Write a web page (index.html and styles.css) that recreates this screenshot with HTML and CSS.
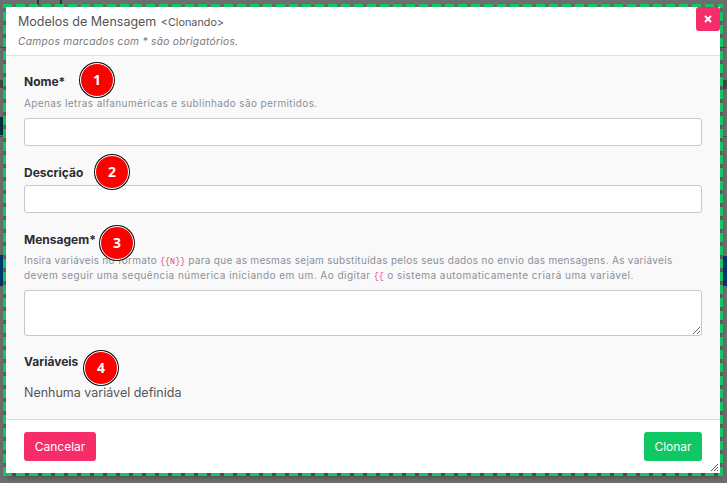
FILE: index.html
```html
<!DOCTYPE html>
<html lang="pt-BR">
<head>
<meta charset="utf-8">
<title>Modelos de Mensagem</title>
<link rel="stylesheet" href="styles.css">
</head>
<body>
<div class="modal">
  <header class="modal-header">
    <h1 class="modal-title">Modelos de Mensagem <small>&lt;Clonando&gt;</small></h1>
    <p class="modal-sub">Campos marcados com * são obrigatórios.</p>
    <button class="close" type="button" aria-label="Fechar">
      <svg width="8" height="8" viewBox="0 0 8 8"><path d="M1 1l6 6M7 1L1 7" stroke="#fff" stroke-width="2"/></svg>
    </button>
  </header>
  <main class="modal-body">
    <section class="field field-nome">
      <label class="label">Nome*<span class="pin pin-1">1</span></label>
      <p class="hint">Apenas letras alfanuméricas e sublinhado são permitidos.</p>
      <input class="control" type="text">
    </section>
    <section class="field field-desc">
      <label class="label">Descrição<span class="pin pin-2">2</span></label>
      <input class="control" type="text">
    </section>
    <section class="field field-msg">
      <label class="label">Mensagem*<span class="pin pin-3">3</span></label>
      <p class="hint hint-long">Insira variáveis no formato <code>{{N}}</code> para que as mesmas sejam substituídas pelos seus dados no envio das mensagens. As variáveis <span class="hint-wide">devem seguir uma sequência númerica iniciando em um. Ao digitar <code>{{</code> o sistema automaticamente criará uma variável.</span></p>
      <textarea class="control area"></textarea>
    </section>
    <section class="field field-vars">
      <label class="label">Variáveis<span class="pin pin-4">4</span></label>
      <p class="none">Nenhuma variável definida</p>
    </section>
  </main>
  <footer class="modal-footer">
    <button class="btn btn-cancel" type="button">Cancelar</button>
    <button class="btn btn-ok" type="button">Clonar</button>
    <svg class="grip" width="9" height="9" viewBox="0 0 9 9"><path d="M1 8l7-7M4 8l4-4M7 8l1-1" stroke="#555" stroke-width="1"/></svg>
  </footer>
</div>
</body>
</html>
```
FILE: styles.css
```css
* { box-sizing: border-box; }
html, body { height: 100%; }
body {
  margin: 0;
  padding: 7px 7px 10px 6px;
  font-family: "Inter", "Liberation Sans", sans-serif;
  color: #3f3f46;
  background-color: #6e6e6e;
  background-repeat: no-repeat;
  background-image:
    linear-gradient(#07303a, #07303a),
    linear-gradient(#00396b, #00396b),
    linear-gradient(#454545, #454545),
    linear-gradient(#00396b, #00396b),
    linear-gradient(#454545, #454545),
    linear-gradient(#4d4d4d, #4d4d4d),
    linear-gradient(#4d4d4d, #4d4d4d),
    linear-gradient(#333, #333),
    linear-gradient(#333, #333);
  background-size:
    3px 18px, 3px 31px, 3px 8px, 4px 30px, 4px 9px,
    727px 1px, 727px 1px, 2px 5px, 2px 5px;
  background-position:
    0 117px, 0 255px, 0 80px, 723px 256px, 723px 80px,
    0 47px, 0 136px, 37px 0, 60px 0;
}
.modal {
  position: relative;
  height: 466px;
  width: 714px;
  background: #fff;
  box-shadow: 0 3px 6px rgba(0,0,0,.45);
  display: flex;
  flex-direction: column;
}
.modal::after {
  content: "";
  position: absolute;
  inset: -3px;
  pointer-events: none;
  background-repeat: no-repeat;
  background-image:
    repeating-linear-gradient(90deg, #0fc763 0 9px, transparent 9px 13px),
    repeating-linear-gradient(90deg, #0fc763 0 9px, transparent 9px 13px),
    repeating-linear-gradient(0deg, #0fc763 0 9px, transparent 9px 13px),
    repeating-linear-gradient(0deg, #0fc763 0 9px, transparent 9px 13px);
  background-size: 100% 3px, 100% 3px, 3px 100%, 3px 100%;
  background-position: 0 0, 0 100%, 0 0, 100% 0;
}
.modal-header {
  position: relative;
  height: 49px;
  padding: 7px 12px 0;
  border-bottom: 1px solid #dedede;
  flex: none;
}
.modal-title {
  margin: 0;
  font-size: 12.5px;
  line-height: 16px;
  font-weight: 400;
  color: #555;
}
.modal-title small { font-size: 10.8px; margin-left: 1px; }
.modal-sub {
  margin: 3px 0 0;
  font-size: 10.2px;
  letter-spacing: .3px;
  line-height: 14px;
  font-style: italic;
  color: #777;
}
.close {
  position: absolute;
  top: 0;
  right: 0;
  width: 24px;
  height: 24px;
  padding: 0;
  border: 0;
  border-radius: 3px;
  background: #f72d6b;
  display: flex;
  align-items: center;
  justify-content: center;
}
.modal-body {
  flex: 1;
  background: #f9f9f9;
  padding: 18px 18px 0 18px;
}
.field { display: block; }
.label {
  position: relative;
  display: block;
  font-size: 12px;
  line-height: 15px;
  font-weight: 700;
  color: #2b2b33;
}
.pin {
  position: absolute;
  width: 34px;
  height: 34px;
  border-radius: 50%;
  background: #f00;
  border: 1.5px solid #fff;
  box-shadow: 0 0 0 1px #111;
  color: #fff;
  font: 700 14px/31px "Open Sans", "Liberation Sans", sans-serif;
  text-align: center;
}
.pin-1 { left: 56px; top: -11px; }
.pin-2 { left: 71px; top: -10px; }
.pin-3 { left: 76px; top: -6px; }
.pin-4 { left: 60px; top: -3px; }
.hint {
  margin: 7px 0 0;
  font-size: 10px;
  letter-spacing: .37px;
  line-height: 15px;
  color: #8b9099;
}
.control {
  display: block;
  width: 678px;
  height: 28px;
  margin-top: 7px;
  padding: 0;
  border: 1px solid #c8c8c8;
  border-radius: 3px;
  background: #fff;
}
.field-desc { margin-top: 19px; }
.field-desc .control { margin-top: 5px; }
.field-msg { margin-top: 19px; }
.hint-long { margin-top: 6px; letter-spacing: .3px; }
.hint-wide { letter-spacing: .47px; }
.hint code {
  font-family: "Liberation Mono", monospace;
  font-size: 8.4px;
  line-height: 1;
  letter-spacing: 0;
  color: #e83e8c;
}
.area { height: 46px; margin-top: 7px; }
.field-vars { margin-top: 18px; }
.none {
  margin: 16px 0 0;
  font-size: 12.5px;
  line-height: 15px;
  color: #555;
}
.modal-footer {
  position: relative;
  flex: none;
  height: 54px;
  border-top: 1px solid #dedede;
  padding: 12px 18px 0 18px;
  display: flex;
  justify-content: space-between;
  align-items: flex-start;
}
.btn {
  height: 29px;
  padding: 0;
  border: 0;
  border-radius: 3px;
  color: #fff;
  font-family: inherit;
  font-size: 12px;
}
.btn-cancel { width: 72px; background: #f72d6b; }
.btn-ok { width: 58px; background: #0fc763; }
.grip { position: absolute; right: 1px; bottom: 1px; }
```
